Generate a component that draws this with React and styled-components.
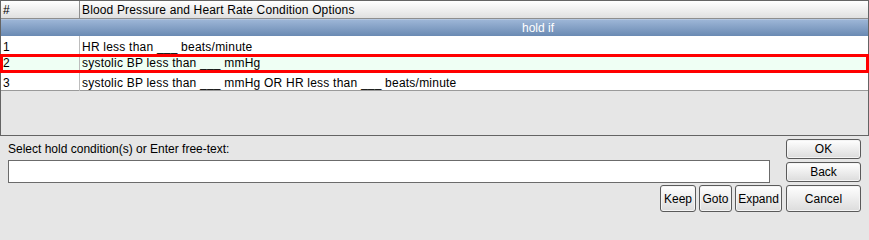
import React from "react";
import styled, { createGlobalStyle } from "styled-components";

const GlobalStyle = createGlobalStyle`
  html, body {
    margin: 0;
    padding: 0;
    background: #e6e6e6;
    font-family: "Liberation Sans", Arial, sans-serif;
    font-size: 12px;
    color: #000;
  }
  * { box-sizing: border-box; }
`;

const Window = styled.div`
  width: 869px;
  height: 220px;
  background: #e6e6e6;
  overflow: hidden;
`;

const ScrollPane = styled.div`
  height: 136px;
  border: 1px solid #646464;
  background: #e6e6e6;
  display: flex;
  flex-direction: column;
`;

const Table = styled.div`
  background: #fff;
  border-bottom: 1px solid #9a9a9a;
`;

const HeaderRow = styled.div`
  display: grid;
  grid-template-columns: 79px 1fr;
  height: 18px;
  border-bottom: 1px solid #8e8e8e;
  background: linear-gradient(#ffffff, #e0e0e0);
`;

const HeaderCell = styled.div`
  padding: 2px 0 0 2px;
  line-height: 14px;
  letter-spacing: 0.15px;
  white-space: nowrap;
  border-right: ${(p) => (p.$last ? "none" : "1px solid #8e8e8e")};
`;

const GroupRow = styled.div`
  height: 17px;
  line-height: 17px;
  padding-left: 521px;
  color: #fff;
  background: linear-gradient(#9cb5d6, #6a8ab3);
  border-top: 1px solid #b3c6e0;
  white-space: nowrap;
`;

const Row = styled.div`
  display: grid;
  grid-template-columns: 79px 1fr;
  height: ${(p) => p.$h}px;
  background: ${(p) => (p.$selected ? "#effff4" : "#fff")};
  position: ${(p) => (p.$selected ? "relative" : "static")};
  z-index: ${(p) => (p.$selected ? 1 : "auto")};
  outline: ${(p) => (p.$selected ? "3px solid #ff0000" : "none")};
  outline-offset: -2px;
`;

const Cell = styled.div`
  padding: ${(p) => (p.$selected ? "0" : "3px")} 0 0 2px;
  line-height: ${(p) => (p.$selected ? "17px" : "16px")};
  letter-spacing: 0.22px;
  white-space: nowrap;
  border-right: ${(p) => (p.$last ? "none" : "1px solid #bdbdbd")};
`;

const Filler = styled.div`
  flex: 1;
  background: #e6e6e6;
`;

const Controls = styled.div`
  display: grid;
  grid-template-columns: 1fr 75px;
  grid-template-rows: 20px 20px 27px;
  column-gap: 4px;
  row-gap: 3px;
  padding: 3px 8px 0 8px;
`;

const Label = styled.div`
  grid-column: 1;
  grid-row: 1;
  margin-top: 3px;
  line-height: 14px;
  white-space: nowrap;
`;

const TextInput = styled.input`
  grid-column: 1;
  grid-row: 2;
  align-self: start;
  margin: -2px 12px 0 0;
  height: 23px;
  border: 1px solid #6b6b6b;
  background: #fff;
  font: inherit;
  padding: 0 3px;
  outline: none;
`;

const SmallButtons = styled.div`
  grid-column: 1;
  grid-row: 3;
  display: flex;
  justify-content: flex-end;
  gap: 3px;
`;

const Button = styled.button`
  width: ${(p) => (p.$w ? `${p.$w}px` : "100%")};
  height: 100%;
  padding: 0;
  border: 1px solid #5a5a5a;
  border-radius: 3px;
  background: linear-gradient(#ffffff, #dcdcdc);
  box-shadow: inset 0 0 0 1px #f4f4f4;
  font-family: "Liberation Sans", Arial, sans-serif;
  font-size: 12px;
  color: #000;
  cursor: pointer;
  white-space: nowrap;
`;

const RightButton = styled(Button)`
  grid-column: 2;
  grid-row: ${(p) => p.$row};
`;

const rows = [
  { n: "1", text: "HR less than ___ beats/minute", h: 19 },
  { n: "2", text: "systolic BP less than ___ mmHg", h: 17, selected: true },
  {
    n: "3",
    text: "systolic BP less than ___ mmHg OR HR less than ___ beats/minute",
    h: 18,
  },
];

export default function App() {
  return (
    <Window>
      <GlobalStyle />
      <ScrollPane>
        <Table>
          <HeaderRow>
            <HeaderCell>#</HeaderCell>
            <HeaderCell $last>Blood Pressure and Heart Rate Condition Options</HeaderCell>
          </HeaderRow>
          <GroupRow>hold if</GroupRow>
          {rows.map((r) => (
            <Row key={r.n} $h={r.h} $selected={r.selected}>
              <Cell $selected={r.selected}>{r.n}</Cell>
              <Cell $selected={r.selected} $last>
                {r.text}
              </Cell>
            </Row>
          ))}
        </Table>
        <Filler />
      </ScrollPane>
      <Controls>
        <Label>Select hold condition(s) or Enter free-text:</Label>
        <TextInput type="text" />
        <SmallButtons>
          <Button $w={36}>Keep</Button>
          <Button $w={33}>Goto</Button>
          <Button $w={47}>Expand</Button>
        </SmallButtons>
        <RightButton $row={1}>OK</RightButton>
        <RightButton $row={2}>Back</RightButton>
        <RightButton $row={3}>Cancel</RightButton>
      </Controls>
    </Window>
  );
}
